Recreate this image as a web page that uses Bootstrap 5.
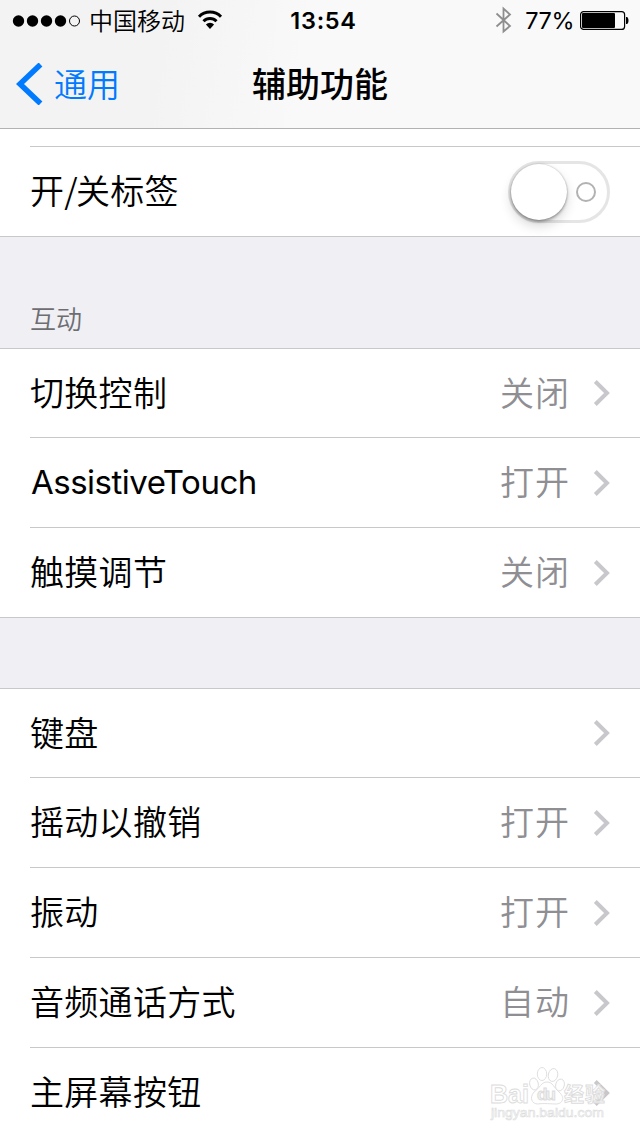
<!DOCTYPE html>
<html lang="zh-CN">
<head>
<meta charset="utf-8">
<meta name="viewport" content="width=device-width, initial-scale=1">
<title>辅助功能</title>
<link href="https://cdn.jsdelivr.net/npm/bootstrap@5.3.0/dist/css/bootstrap.min.css" rel="stylesheet">
<style>
body{width:640px;height:1136px;overflow:hidden;background:#efeff4;color:#000;font-family:Inter,"Noto Sans CJK SC",sans-serif}
.zh{font-family:"Noto Sans CJK SC",sans-serif;font-weight:350}
.topbar{height:129px;border-bottom:1px solid #b2b2b2;background:linear-gradient(100deg,#f3f3f3 0,#f3f3f3 25%,#f9f9f9 48%,#f9f9f9 100%)}
.status{height:40px;font-size:24px;line-height:40px}
.status .side{width:240px}
.dots{margin:1px 8px 0 12px}
.wifi{margin-left:12px}
.clock{font-weight:600;font-size:23.5px;letter-spacing:.7px;padding:1px 0 0 7px}
.pct{font-size:23.5px;letter-spacing:-.5px;margin:1px 6px 0 13px}
.batt{margin:1px 11px 0 0}
.navrow{height:88px;line-height:86px;font-size:34px}
.back{color:#007aff;font-size:33px;width:220px;text-decoration:none}
.back svg{margin:0 11px 0 15px}
.back span{margin-top:-2px}
.heading{font-weight:500;font-size:34px}
.setting{height:90px;border-bottom:1px solid #c8c7cc;margin-left:30px;padding-right:30px;font-size:34px;line-height:84px;letter-spacing:.3px}
.setting>span{margin-top:-3px}
.setting.first{height:89px}
.setting.tail{border-color:transparent}
.group{background:#fff;border-top:1px solid #c8c7cc}
.group.closed{border-bottom:1px solid #c8c7cc}
.group.closed .setting:last-child{height:89px;border:0}
.sliver{height:18px;border-bottom:1px solid #c8c7cc;margin-left:30px}
.value{color:#8e8e93;letter-spacing:1px;margin-right:22px}
.setting>.latin{font-family:Inter,sans-serif;font-weight:400;font-size:33px;letter-spacing:-.5px;margin-top:-2px;padding-left:1px}
.slash{margin:0 -2px 0 0}
.section-title{height:111px;padding:62px 0 0 30px;font-size:26px;line-height:38px;color:#6d6d72}
.gap{height:70px}
.toggle{width:102px;height:62px;border:3px solid #e5e5e5;border-radius:31px}
.knob{width:56px;height:56px;border-radius:50%;background:#fff;box-shadow:0 6px 12px rgba(0,0,0,.16),0 2px 3px rgba(0,0,0,.28),0 0 2px rgba(0,0,0,.25)}
.off{width:20px;height:20px;border:2px solid #b2b2b2;border-radius:50%;margin-right:11px;margin-top:1px}
.stamp{left:486px;top:1062px}
</style>
</head>
<body>
<header class="topbar">
<div class="status d-flex justify-content-between">
<div class="side d-flex align-items-center">
<svg class="dots" width="69" height="14" viewBox="0 0 69 14"><g fill="#000"><circle cx="6.5" cy="7" r="5.7"/><circle cx="20.5" cy="7" r="5.7"/><circle cx="34.5" cy="7" r="5.7"/><circle cx="48.5" cy="7" r="5.7"/></g><circle cx="62.5" cy="7" r="5" fill="none" stroke="#000"/></svg>
<span class="zh">中国移动</span>
<svg class="wifi" width="26" height="20" viewBox="0 0 26 20"><g fill="none" stroke="#000" stroke-width="3"><path d="M2 6.7a15.500 15.500 0 0 1 22 0M6.500 11.200a9.200 9.200 0 0 1 13 0"/></g><path d="M8.900 14.500a5.800 5.800 0 0 1 8.200 0L13 19z"/></svg>
</div>
<div class="clock">13:54</div>
<div class="side d-flex align-items-center justify-content-end">
<svg width="17" height="28" viewBox="0 0 17 28"><path d="M1.500 7.500 15 20 8.500 25.500V2.500L15 8.500 1.500 20.500" fill="none" stroke="#8e8e8e" stroke-width="1.8"/></svg>
<span class="pct">77%</span>
<svg class="batt" width="49" height="19" viewBox="0 0 49 19"><rect x=".6" y=".6" width="44" height="17.800" rx="3" fill="none" stroke="#000" stroke-width="1.2"/><rect x="2" y="2" width="33" height="15" rx="1"/><path d="M46 6h1c2 1 2 6 0 7h-1z"/></svg>
</div>
</div>
<nav class="navrow d-flex justify-content-between zh">
<a class="back d-flex align-items-center" href="#"><svg width="28" height="42" viewBox="0 0 28 42"><path d="M25.500 1.500 5 21l20.500 19.500" fill="none" stroke="#007aff" stroke-width="5.500"/></svg><span>通用</span></a>
<div class="heading">辅助功能</div><div class="back"></div>
</nav>
</header>
<main>
<section class="bg-white">
<div class="sliver"></div>
<div class="group closed border-top-0"><div class="setting d-flex justify-content-between align-items-center zh"><span>开<span class="slash">/</span>关标签</span><div class="toggle d-flex justify-content-between align-items-center"><div class="knob"></div><div class="off"></div></div></div></div>
</section>
<div class="section-title zh">互动</div>
<section class="group closed zh">
<div class="setting first d-flex align-items-center"><span class="me-auto">切换控制</span><span class="value">关闭</span><svg width="18" height="28"><use href="#chevron"/></svg></div>
<div class="setting d-flex align-items-center"><span class="me-auto latin">AssistiveTouch</span><span class="value">打开</span><svg width="18" height="28"><use href="#chevron"/></svg></div>
<div class="setting d-flex align-items-center"><span class="me-auto">触摸调节</span><span class="value">关闭</span><svg width="18" height="28"><use href="#chevron"/></svg></div>
</section>
<div class="gap"></div>
<section class="group zh">
<div class="setting first d-flex align-items-center"><span class="me-auto">键盘</span><svg width="18" height="28"><use href="#chevron"/></svg></div>
<div class="setting d-flex align-items-center"><span class="me-auto">摇动以撤销</span><span class="value">打开</span><svg width="18" height="28"><use href="#chevron"/></svg></div>
<div class="setting d-flex align-items-center"><span class="me-auto">振动</span><span class="value">打开</span><svg width="18" height="28"><use href="#chevron"/></svg></div>
<div class="setting d-flex align-items-center"><span class="me-auto">音频通话方式</span><span class="value">自动</span><svg width="18" height="28"><use href="#chevron"/></svg></div>
<div class="setting tail d-flex align-items-center"><span class="me-auto">主屏幕按钮</span><svg width="18" height="28"><use href="#chevron"/></svg></div>
</section>
</main>
<svg class="stamp position-absolute" width="124" height="64" viewBox="0 0 124 64" font-family="'Liberation Sans','Noto Sans CJK SC',sans-serif">
<g fill="#fff" fill-opacity=".8" stroke="#dcdcdc" stroke-width=".9">
<ellipse cx="56" cy="12" rx="4.700" ry="6.500"/><ellipse cx="67" cy="13" rx="4.700" ry="6.500" transform="rotate(12 67 13)"/><ellipse cx="48" cy="22" rx="4.300" ry="6" transform="rotate(-12 48 22)"/><ellipse cx="74" cy="23" rx="4.300" ry="6" transform="rotate(15 74 23)"/>
<path d="M61 20c6 0 7 6 12 10 7 6 3 12-3 12-4 0-13-1-18 0-6 0-9-6-4-12 6-4 7-10 13-10z"/>
<text x="4" y="41" font-size="26" font-weight="700" textLength="39" lengthAdjust="spacingAndGlyphs">Bai</text>
<text x="51" y="38" font-size="17" font-weight="700" textLength="19" fill="#eee">du</text>
<text x="78" y="40" font-size="20" font-weight="700" textLength="41">经验</text>
<text x="5" y="55" font-size="13" textLength="113" lengthAdjust="spacingAndGlyphs" stroke-width=".6">jingyan.baidu.com</text>
</g></svg>
<svg class="d-none"><defs><path id="chevron" d="M3.300 2.500 15 14 3.300 25.500" fill="none" stroke="#c7c7cc" stroke-width="4"/></defs></svg>
<script src="https://cdn.jsdelivr.net/npm/bootstrap@5.3.0/dist/js/bootstrap.bundle.min.js"></script>
</body>
</html>
